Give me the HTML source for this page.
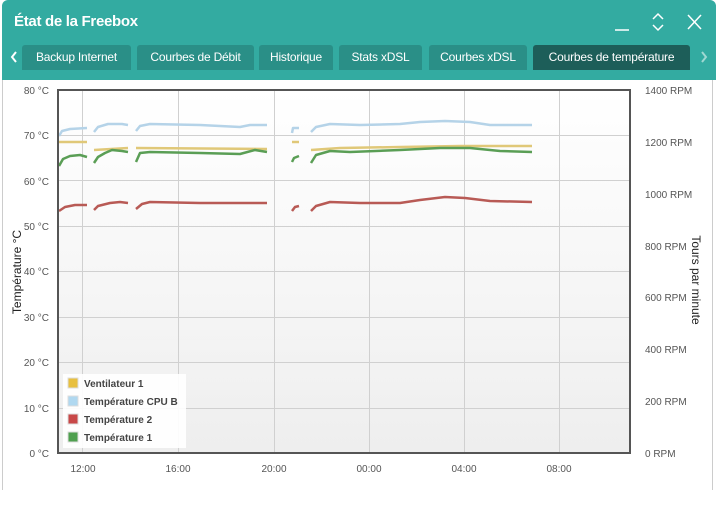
<!DOCTYPE html>
<html><head><meta charset="utf-8"><style>
body{margin:0;width:718px;height:505px;background:#fff;font-family:"Liberation Sans",sans-serif;overflow:hidden;position:relative}
.hdr{position:absolute;left:2px;top:0;width:714px;height:80px;background:#33aba1;border-radius:6px 6px 0 0}
.title{position:absolute;left:14px;top:13px;color:#fff;font-size:15px;font-weight:bold;letter-spacing:-0.3px}
.tab{position:absolute;top:45px;height:25px;line-height:25px;background:#2a8f87;color:#fff;font-size:12px;text-align:center;border-radius:3px 3px 0 0;letter-spacing:-0.2px}
</style></head><body>
<div class="hdr"></div>
<div class="title">État de la Freebox</div>
<svg style="position:absolute;left:0;top:0" width="718" height="80">
<g stroke="#fff" stroke-width="1.5" fill="none">
<line x1="615" y1="30" x2="629" y2="30"/>
<polyline points="653,19 658,14 663,19"/><polyline points="653,25 658,30 663,25"/>
<line x1="688" y1="15" x2="701" y2="29"/><line x1="701" y1="15" x2="688" y2="29"/>
<polyline stroke-width="2" points="16,52 12,57 16,62"/>
<polyline stroke="#9fd8d2" stroke-width="2" points="702,52 706,57 702,62"/>
</g></svg>
<div class="tab" style="left:22px;width:109px">Backup Internet</div>
<div class="tab" style="left:137px;width:117px">Courbes de Débit</div>
<div class="tab" style="left:259px;width:74px">Historique</div>
<div class="tab" style="left:339px;width:83px">Stats xDSL</div>
<div class="tab" style="left:429px;width:98px">Courbes xDSL</div>
<div class="tab" style="left:533px;width:157px;background:#1d5e59">Courbes de température</div>
<div style="position:absolute;left:2px;top:80px;width:1px;height:410px;background:#ccc"></div>
<div style="position:absolute;left:712px;top:80px;width:1px;height:410px;background:#ccc"></div>
<svg style="position:absolute;left:0;top:0" width="718" height="505">
<defs><linearGradient id="g" x1="0" y1="0" x2="0" y2="1"><stop offset="0" stop-color="#fff"/><stop offset="1" stop-color="#eeeeee"/></linearGradient></defs>
<rect x="58" y="90" width="572" height="363" fill="url(#g)"/>
<g stroke="#d0d0d0" stroke-width="1">
<line x1="82.5" y1="90" x2="82.5" y2="453"/><line x1="178.5" y1="90" x2="178.5" y2="453"/><line x1="274.5" y1="90" x2="274.5" y2="453"/><line x1="369.5" y1="90" x2="369.5" y2="453"/><line x1="464.5" y1="90" x2="464.5" y2="453"/><line x1="559.5" y1="90" x2="559.5" y2="453"/>
<line x1="58" y1="135.5" x2="630" y2="135.5"/><line x1="58" y1="180.5" x2="630" y2="180.5"/><line x1="58" y1="226.5" x2="630" y2="226.5"/><line x1="58" y1="271.5" x2="630" y2="271.5"/><line x1="58" y1="317.5" x2="630" y2="317.5"/><line x1="58" y1="362.5" x2="630" y2="362.5"/><line x1="58" y1="408.5" x2="630" y2="408.5"/>
</g>
<g fill="none" stroke-width="2.5" stroke-linejoin="round">
<g stroke="#b5d3e8">
<polyline points="59,136 62,131 70,129 87,128"/><polyline points="94,132 98,127 108,124 122,124 128,125"/><polyline points="136,131 140,126 150,124 200,125 240,127 250,125 267,125"/><polyline points="292,133 293,128 299,128"/><polyline points="311,132 316,127 330,124 360,125 400,124 420,122 445,121 470,122 490,125 532,125"/>
</g>
<g stroke="#e0c878">
<polyline points="59,142 87,142"/><polyline points="94,150 128,148"/><polyline points="136,148 267,149"/><polyline points="292,142 299,142"/><polyline points="311,150 340,148 400,147 460,146 532,146"/>
</g>
<g stroke="#5a9e55">
<polyline points="59,166 63,159 70,156 80,155 87,157"/><polyline points="94,163 98,157 105,153 112,150 122,151 128,152"/><polyline points="136,162 140,153 150,152 200,153 240,154 255,150 267,152"/><polyline points="292,162 294,158 299,156"/><polyline points="311,163 316,155 330,151 350,152 400,150 440,148 470,148 500,151 532,152"/>
</g>
<g stroke="#b85a55">
<polyline points="59,211 65,207 75,205 87,205"/><polyline points="94,210 98,206 110,203 120,202 128,203"/><polyline points="136,209 142,204 150,202 200,203 267,203"/><polyline points="292,211 295,207 299,206"/><polyline points="311,211 316,206 330,202 360,203 400,203 420,200 445,197 465,198 490,201 532,202"/>
</g>
</g>
<rect x="58" y="90" width="572" height="363" fill="none" stroke="#555" stroke-width="2"/>
<rect x="63" y="374" width="123" height="74" fill="#fff" opacity="0.9"/>
<g font-family="Liberation Sans" font-size="10" font-weight="bold" fill="#444">
<rect x="68" y="378" width="10" height="10" fill="#e8c040" stroke="#ddd"/><text x="84" y="387">Ventilateur 1</text>
<rect x="68" y="396" width="10" height="10" fill="#b0d8f0" stroke="#ddd"/><text x="84" y="405">Température CPU B</text>
<rect x="68" y="414" width="10" height="10" fill="#c84848" stroke="#ddd"/><text x="84" y="423">Température 2</text>
<rect x="68" y="432" width="10" height="10" fill="#50a050" stroke="#ddd"/><text x="84" y="441">Température 1</text>
</g>
<g font-family="Liberation Sans" font-size="10" fill="#555" text-anchor="end">
<text x="49" y="94">80 °C</text><text x="49" y="139">70 °C</text><text x="49" y="185">60 °C</text><text x="49" y="230">50 °C</text><text x="49" y="275">40 °C</text><text x="49" y="321">30 °C</text><text x="49" y="366">20 °C</text><text x="49" y="412">10 °C</text><text x="49" y="457">0 °C</text>
</g>
<g font-family="Liberation Sans" font-size="10" fill="#555">
<text x="645" y="94">1400 RPM</text><text x="645" y="146">1200 RPM</text><text x="645" y="198">1000 RPM</text><text x="645" y="250">800 RPM</text><text x="645" y="301">600 RPM</text><text x="645" y="353">400 RPM</text><text x="645" y="405">200 RPM</text><text x="645" y="457">0 RPM</text>
</g>
<g font-family="Liberation Sans" font-size="10" fill="#555" text-anchor="middle">
<text x="83" y="472">12:00</text><text x="178" y="472">16:00</text><text x="274" y="472">20:00</text><text x="369" y="472">00:00</text><text x="464" y="472">04:00</text><text x="559" y="472">08:00</text>
</g>
<text transform="translate(21,272) rotate(-90)" text-anchor="middle" font-family="Liberation Sans" font-size="12" fill="#222">Température °C</text>
<text transform="translate(692,280) rotate(90)" text-anchor="middle" font-family="Liberation Sans" font-size="12" fill="#222">Tours par minute</text>
</svg>
</body></html>
